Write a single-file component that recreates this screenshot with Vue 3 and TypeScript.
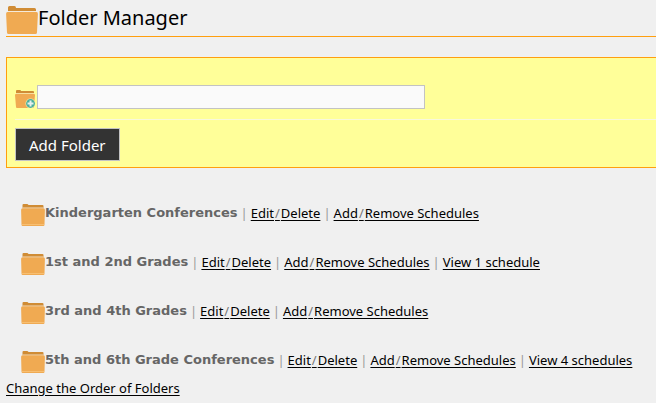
<script setup lang="ts">
import { ref } from 'vue'

interface Folder {
  name: string
  schedules: number
}

const newFolder = ref('')

const folders = ref<Folder[]>([
  { name: 'Kindergarten Conferences', schedules: 0 },
  { name: '1st and 2nd Grades', schedules: 1 },
  { name: '3rd and 4th Grades', schedules: 0 },
  { name: '5th and 6th Grade Conferences', schedules: 4 },
])

function addFolder(): void {
  const name = newFolder.value.trim()
  if (!name) return
  folders.value.push({ name, schedules: 0 })
  newFolder.value = ''
}
</script>

<template>
  <main class="page">
    <header class="title">
      <svg class="title-icon" viewBox="0 0 32 28" aria-hidden="true">
        <path fill="#d08c35" d="M2 6V1.500Q2 0 3.500 0H8.500Q10 0 10 2H28.500Q30 2 30 3.500V6Z" />
        <path fill="#f5ead9" d="M2 5H30V6H2Z" />
        <path fill="#f0aa52" d="M1.500 6H30.500Q32 6 31.900 8L31 26.500Q30.900 28 29.500 28H2.500Q1.100 28 1 26.500L0.100 8Q0 6 1.500 6Z" />
      </svg>
      <h1>Folder Manager</h1>
    </header>

    <form class="panel" @submit.prevent="addFolder">
      <div class="field">
        <label for="folder-name" aria-label="Folder name">
          <svg class="add-icon" viewBox="0 0 20 18" aria-hidden="true">
            <path fill="#d08c35" d="M1 3V1Q1 0 2 0H5Q6 0 6 1H18Q19 1 19 2V3Z" />
            <path fill="#f7dfa0" d="M1 3H19V4H1Z" />
            <path fill="#f0aa52" d="M1 4H19Q20 4 20 5L19 17Q19 18 18 18H2Q1 18 1 17L0 5Q0 4 1 4Z" />
            <circle cx="15.500" cy="13.500" r="5" fill="#f4e9a8" />
            <circle cx="15.500" cy="13.500" r="4.400" fill="#4caf9d" />
            <path fill="none" stroke="#e6f0ef" stroke-width="2" d="M15.500 10.500V16.500M12.500 13.500H18.500" />
          </svg>
        </label>
        <input id="folder-name" v-model="newFolder" type="text" />
      </div>
      <div class="actions">
        <button type="submit">Add Folder</button>
      </div>
    </form>

    <ul class="folders">
      <li v-for="folder in folders" :key="folder.name">
        <svg class="row-icon" viewBox="0 0 24 22" aria-hidden="true">
          <path fill="#d08c35" d="M1.500 4V1Q1.500 0 2.500 0H6Q7 0 7.500 1H21.500Q22.500 1 22.500 2V4Z" />
          <path fill="#f3dfc2" d="M1.500 3.500H22.500V4.500H1.500Z" />
          <path fill="#f0aa52" d="M1.500 4.200H22.500Q24 4.200 23.900 6L23.500 20.800Q23.400 22 22.500 22H1.500Q0.600 22 0.500 20.800L0.100 6Q0 4.200 1.500 4.200Z" />
          <path fill="#f7bf72" d="M1 20H23V21H1Z" />
        </svg>
        <strong>{{ folder.name }}</strong>
        <span class="bar">|</span>
        <a href="#edit">Edit<i>/</i>Delete</a>
        <span class="bar">|</span>
        <a href="#schedules">Add<i>/</i>Remove Schedules</a>
        <template v-if="folder.schedules > 0">
          <span class="bar">|</span>
          <a href="#view">View {{ folder.schedules }} {{ folder.schedules === 1 ? 'schedule' : 'schedules' }}</a>
        </template>
      </li>
    </ul>

    <a class="order" href="#order">Change the Order of Folders</a>
  </main>
</template>

<style>
body {
  background: #f0f0f0;
}
</style>

<style scoped>
.page {
  padding: 6px 0 0 6px;
  font: 13px/18px 'Noto Sans', 'Open Sans', sans-serif;
  color: #666;
}

svg {
  display: block;
  flex: none;
}

.title {
  display: flex;
  height: 30px;
  border-bottom: 1px solid #ff9f0f;
}

.title-icon {
  width: 32px;
  height: 28px;
}

h1 {
  margin: 0;
  font-size: 20px;
  font-weight: 400;
  line-height: 24px;
  color: #000;
}

.panel {
  margin-top: 20px;
  padding: 27px 0 6px 8px;
  border: 1px solid #ff9f0f;
  border-right: 0;
  background: #ff9;
}

.field {
  display: flex;
  align-items: center;
  gap: 2px;
  padding-bottom: 10px;
  border-bottom: 1px solid #f8f8dc;
}

.add-icon {
  width: 20px;
  height: 18px;
  margin-top: 4px;
}

input {
  box-sizing: border-box;
  width: 388px;
  height: 24px;
  padding: 0 4px;
  border: 1px solid #c3c3c3;
  background: #fafafa;
  font: inherit;
}

.actions {
  padding-top: 8px;
}

button {
  display: block;
  height: 33px;
  padding: 0 13px;
  border: 1px solid #c3c3c3;
  background: #333;
  color: #fff;
  font: 15px 'Noto Sans', 'Open Sans', sans-serif;
}

.folders {
  display: grid;
  gap: 27px;
  margin: 36px 0 6px;
  padding: 0 0 0 15px;
  list-style: none;
}

li {
  display: flex;
  height: 22px;
  white-space: nowrap;
}

.row-icon {
  width: 24px;
  height: 22px;
}

strong {
  font-family: 'DejaVu Sans', sans-serif;
}

.bar {
  padding: 0 3px;
  color: #999;
}

a {
  color: #000;
  text-underline-offset: 2px;
}

i {
  padding: 0 1px;
  color: #777;
  font-style: normal;
}
</style>
